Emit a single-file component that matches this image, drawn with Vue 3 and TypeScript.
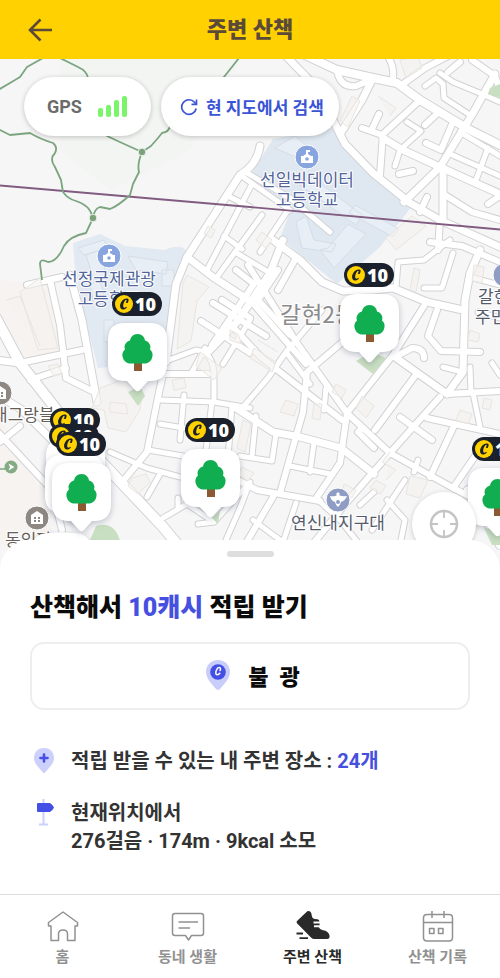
<script setup lang="ts">
interface Road { d: string; w: number }
interface Pin { x: number; y: number; badge: boolean }

const roads: Road[] = [
  // north-east quarter
  { w: 7, d: 'M285 55L317 88L337 128L345 144L373 173L410 203L440 220L500 247' },
  { w: 8, d: 'M305 55L337 70L373 78L397 83L420 100L453 120L470 130L500 145' },
  { w: 7, d: 'M373 78L362 100L340 134' },
  { w: 6, d: 'M387 55Q396 68 392 82' },
  { w: 6, d: 'M450 55L425 68L403 84' },
  { w: 6, d: 'M337 70Q340 88 356 86L373 79' },
  { w: 6, d: 'M418 102L383 134L380 175' },
  { w: 7, d: 'M383 138L403 150L440 167L500 194' },
  { w: 6, d: 'M362 128L382 135M379 114L372 129' },
  { w: 7, d: 'M495 74L473 113L440 167L404 202' },
  { w: 7, d: 'M443 168L443 219' },
  { w: 5, d: 'M395 166L400 150L421 131L407 122' },
  { w: 6, d: 'M399 174L413 171M425 125L440 111' },
  { w: 6, d: 'M426 143L441 150L453 122' },
  { w: 5, d: 'M460 132L500 156M450 154L500 176M488 148L476 180' },
  { w: 5, d: 'M425 86L436 78L443 84L444 98L470 115' },
  { w: 5, d: 'M440 73L453 82L482 94L500 102' },
  { w: 6, d: 'M472 60L495 76L500 90M448 72L460 62' },
  { w: 6, d: 'M427 197L420 212M445 195L472 212L500 220M488 204L500 196' },
  { w: 6, d: 'M440 220L438 250M430 242L462 246L500 262' },
  // north-west quarter
  { w: 7, d: 'M260 146Q257 165 240 175L187 257L176 284L166 362' },
  { w: 7, d: 'M187 257L213 277L250 301' },
  { w: 5, d: 'M252 184L207 270M228 196L250 207M243 177L290 210' },
  { w: 5, d: 'M217 277L262 215M235 252L270 273M224 236L242 249' },
  { w: 5, d: 'M247 173L290 198L330 232M288 210L260 252' },
  { w: 6, d: 'M236 270L254 284L212 345M222 300L250 318M201 321L250 353M213 303L266 336' },
  { w: 5, d: 'M250 320L223 364M205 348L192 372' },
  // west quarter
  { w: 6, d: 'M27 285L62 277M50 280L60 325L63 350L66 378L96 393' },
  { w: 7, d: 'M70 275L82 320L97 402' },
  { w: 10, d: 'M-4 318L20 363L67 423L97 457L163 527L178 545' },
  { w: 6, d: 'M20 363L82 350M30 380L66 368' },
  { w: 7, d: 'M-4 360L20 363M-2 395L22 410L52 440L60 456' },
  { w: 6, d: 'M-4 430L52 490L62 530M0 442L20 426' },
  { w: 5, d: 'M166 361L196 350Q214 352 214 377L214 402L250 408' },
  { w: 6, d: 'M163 374L208 374M163 374L157 402L147 452L123 481' },
  { w: 5, d: 'M160 400L214 402M110 452L147 468L180 477M148 450L183 456M160 474L147 497' },
  { w: 5, d: 'M160 424L184 428M184 395L180 440M212 402L206 450M232 406L227 470' },
  { w: 5, d: 'M163 518L187 504L214 522L198 524M178 498L178 508M214 522L250 482M250 482L240 508L226 540' },
  // centre
  { w: 7, d: 'M273 240L300 260L322 282L343 291L373 290L393 288L427 302L463 310' },
  { w: 7, d: 'M283 240L270 273L237 322L206 354' },
  { w: 6, d: 'M248 265L297 343L347 413L390 453L453 488L500 512' },
  { w: 6, d: 'M230 324L262 358L307 393L342 420' },
  { w: 6, d: 'M278 270L258 300L290 335M296 258L278 290M250 300L306 364' },
  { w: 6, d: 'M345 340L307 372L303 412L280 493' },
  { w: 5, d: 'M322 310L286 352L268 378L244 406M286 352L310 384M326 388L324 410' },
  { w: 6, d: 'M424 306L393 355L347 413L340 463L317 497' },
  { w: 7, d: 'M395 357L447 394L463 372L465 300L470 273L480 250' },
  { w: 6, d: 'M415 376L375 430M447 394L500 391M440 397L390 453L347 502L312 545' },
  { w: 6, d: 'M437 310L428 336L441 351L480 352M397 356L412 348Q424 348 424 358' },
  { w: 5, d: 'M470 367L471 392M443 367L462 372M492 363L500 375M473 393L480 427' },
  { w: 5, d: 'M396 288L398 262L424 260L450 240M453 253L442 288L424 288M470 277L500 285M478 312L500 318' },
  { w: 7, d: 'M236 408L273 432L300 437L341 448L374 474' },
  { w: 5, d: 'M240 456L272 461L276 434M256 416L252 456M314 442L310 472M290 466L330 474' },
  { w: 6, d: 'M230 476L257 490L320 501M273 497L245 545M374 448L358 432L362 428' },
  { w: 5, d: 'M360 505L374 492M296 503L282 545M318 500L340 520L360 545M418 460L414 472' },
  { w: 6, d: 'M427 418L500 434M453 428L430 477M400 417L432 440M478 452L453 488' },
  { w: 5, d: 'M387 500L405 520L400 545M405 480L372 530M253 520L280 540' },
  { w: 8, d: 'M474 498L500 545M468 490L500 480' }
]

const buildings = [
  'M352 96l8 5-12 26-8-6zM400 60l18-4 4 12-16 10zM378 96l18 12-6 8',
  'M208 226l7 4-4 8-7-4zM20 292l20-14 18 70-20 2zM6 300l14-4 20 50',
  'M187 275l22 12-12 14-6 40-14 8 6-66zM200 352l22 16-8 12-18-14z',
  'M230 330l8 4 4 10-12-4zM172 380l12-2 2 10-12 2z',
  'M100 388l22-8 20 12-2 18-14 22-18-4-4-18-12-2zM110 402l16 2 2 10-18-2z',
  'M132 478l14-4 4 8-12 12-10-8zM48 366l10-2 4 10-8 2z',
  'M254 348l22 14-4 10-22-14zM258 340l20 12M286 400l12 4-4 12-14-4zM314 404l8 0-2 16-8-2z',
  'M362 396l12 10-8 12-10-10zM336 384l10 6-4 8-10-6zM414 268l6 2-4 22-6-2z',
  'M386 480l10-10-14-8 8-10M470 330l10 4-2 8-10-2zM474 265l10 2-2 16-10-2z',
  'M243 420l8 4-6 28-8-4zM410 476l18 4-8 18-14-4zM376 480l10 6-6 8-10-6z',
  'M386 238l26-22 14 10-30 24zM262 232l10 8-6 8-10-8zM484 398l8 2-2 10-8-2z',
  'M242 467l12 6-6 8-10-6zM344 484l12 6-4 8-10-6zM460 410l12 4-4 10-12-4z'
]

const greens = [
  'M490 88L500 84V98L488 94z',
  'M356 361L372 352L386 358L373 374z',
  'M128 392L140 386L145 396L138 406z',
  'M88 545L96 526Q116 520 121 545z',
  'M212 518L220 510L218 524z',
  'M484 528L500 530V545H492z'
]

const trails = [
  'M-2 90L10 83L20 77L27 67L43 58',
  'M60 58L78 67Q87 71 88 78L107 136L122 143L142 152',
  'M239 58L224 77L170 126Q169 132 162 133L158 138L151 146L142 152',
  'M-2 129L10 135L30 133Q40 139 53 143Q58 147 55 153Q49 159 55 167L61 180L63 192Q68 199 76 201Q90 205 93 218',
  'M142 152Q137 164 139 172L133 184L130 195Q118 206 110 209L100 207Q94 209 93 218L86 233Q70 236 64 246Q57 262 48 262Q40 258 40 264L42 280'
]

// Coordinates are the upper-left corner of each pin, measured inside the map.
const pins: Pin[] = [
  { x: 340, y: 204, badge: true },
  { x: 108, y: 233, badge: true },
  { x: 181, y: 359, badge: true },
  { x: 468, y: 378, badge: true },
  { x: 32, y: 443, badge: false },
  { x: 46, y: 349, badge: true },
  { x: 45, y: 365, badge: true },
  { x: 52, y: 373, badge: true }
]
const mapWidth = 500

const placeCount = 24
const steps = 276
const metres = 174
const kcal = 9
</script>

<template>
  <div class="screen">
    <header class="topbar">
      <button class="back" type="button" aria-label="뒤로">
        <svg width="26" height="24" viewBox="0 0 26 24"><path d="M24 12H2M12.500 1.500L2 12l10.500 10.500" fill="none" stroke="currentColor" stroke-width="2.600" /></svg>
      </button>
      <h1>주변 산책</h1>
    </header>

    <section class="map" aria-label="지도">
      <svg class="tiles" viewBox="0 59 500 511" preserveAspectRatio="xMidYMin slice">
        <rect y="59" width="500" height="511" fill="#f6f6f7" />
        <path d="M60 59H240L190 150L110 190L60 150z" fill="#f3f5f3" />
        <path d="M0 280L50 285L60 350L20 362L0 330zM0 420L50 490L52 545H0z" fill="#f6f3f1" />
        <path d="M250 176L273 139L333 128L412 206L380 247L337 284L280 238L290 212z" fill="#dfe8f1" />
        <path d="M73 243L100 234L125 246L165 250Q180 243 187 251L182 270L172 300L165 362L98 368L88 330L75 270z" fill="#e1e9f2" />
        <g fill="#e7eef5" stroke="#d5dde8">
          <path d="M86 255l14-5 6 26-12 4zM78 248l26-8 4 8-24 7zM128 256l40 6-2 12-30-4zM104 320h10v22h-10zM162 270h12v16h-12zM90 284l10-3 6 22-12 2z" />
          <path d="M275 148l20-12 12 10-14 10zM300 185l12-8 50 38-6 10zM355 205l44 24-6 8-44-24zM296 222l10-6 8 24 22 4-4 8-30-4zM320 250l8-2 20-24 18 10-32 34-6-8z" />
        </g>
        <g fill="none" stroke-linejoin="round" stroke-linecap="round">
          <path v-for="(r, i) in roads" :key="'c' + i" :d="r.d" stroke="#d2d2d5" :stroke-width="r.w + 2" />
          <path v-for="(r, i) in roads" :key="'f' + i" :d="r.d" stroke="#ffffff" :stroke-width="r.w" />
        </g>
        <path v-for="(b, i) in buildings" :key="'b' + i" :d="b" fill="#f5f2ee" fill-opacity=".6" stroke="#e9e5df" />
        <path v-for="(g, i) in greens" :key="'g' + i" :d="g" fill="#c9dfc2" />
        <path d="M0 185.500L250 207L500 229.500" fill="none" stroke="#815b80" stroke-width="1.800" />
        <g fill="none" stroke="#7ba57f" stroke-width="1.800" stroke-linejoin="round">
          <path v-for="(t, i) in trails" :key="'t' + i" :d="t" />
        </g>
        <g fill="#7ba07a" stroke="#e8f0e8" stroke-width="1">
          <circle cx="142" cy="152" r="3.800" /><circle cx="93" cy="218" r="3.800" />
        </g>
        <path d="M-2 469h8" stroke="#7ba57f" stroke-width="1.500" />
        <circle cx="11" cy="467" r="6.500" fill="#85ab85" /><path d="M8.500 463.500l6 3.500-6 3.500 1.500-3.500z" fill="#fff" />

        <g stroke="#fff" stroke-width="1">
          <circle cx="307" cy="157" r="12" fill="#88a5e0" />
          <circle cx="109" cy="256" r="12" fill="#88a5e0" />
          <circle cx="338" cy="500" r="12" fill="#8f9cc4" />
          <circle cx="505" cy="275" r="12" fill="#8f9cc4" />
          <circle cx="0" cy="393" r="12" fill="#8e8883" />
          <circle cx="37" cy="518" r="12" fill="#8e8883" />
        </g>
        <g v-for="s in [{ x: 307, y: 157 }, { x: 109, y: 256 }]" :key="s.x" :transform="`translate(${s.x} ${s.y})`">
          <path d="M-6 6V-1h2l3-2v-4h4v2H1v2l3 2h2v7z" fill="#fff" /><circle cy="2" r="1.800" fill="#88a5e0" />
        </g>
        <path d="M330 496q5 1 7-1l-1-1 2-2 2 2-1 1q3 2 8 1-2 5-6 6-1 4-3 5-2-1-3-5-4-1-5-6z" fill="#fff" /><circle cx="338" cy="502" r="2" fill="#8f9cc4" />
        <g v-for="h in [{ x: 37, y: 518 }, { x: 0, y: 393 }]" :key="h.y" :transform="`translate(${h.x} ${h.y})`">
          <path d="M-6 6v-9l6-4 6 4v9z" fill="#fff" /><path d="M-3-1h2v2h-2zM1-1h2v2H1zM-3 2h2v2h-2zM1 2h2v2H1z" fill="#8e8883" />
        </g>
        <g class="labels" text-anchor="middle">
          <g class="blue">
            <text x="307" y="186">선일빅데이터</text><text x="307" y="206">고등학교</text>
            <text x="109" y="285">선정국제관광</text><text x="109" y="305">고등학교</text>
          </g>
          <text class="slate" x="338" y="529">연신내지구대</text>
          <g class="slate" text-anchor="start"><text x="478" y="303">갈현2동</text><text x="475" y="323">주민센터</text></g>
          <text class="district" text-anchor="start" x="280" y="323">갈현2동</text>
          <g class="brown" text-anchor="start"><text x="-8" y="421">래그랑블</text><text x="5" y="546">동익파크</text></g>
        </g>
      </svg>

      <div
        v-for="(pin, i) in pins"
        :key="i"
        class="pin"
        :style="{ left: (pin.x / mapWidth) * 100 + '%', top: pin.y + 'px' }"
      >
        <span class="badge" :class="{ hidden: !pin.badge }">
          <svg width="18" height="18" viewBox="0 0 20 20"><circle cx="10" cy="10" r="10" fill="#ffd200" /><path d="M14.800 4.500C11.500 2.400 6 6.500 5.600 12c-.2 4.800 4.600 5.400 7.600 1.800l-.7-.7c-1.900 1.800-3.600 1.300-3.400-1.300.2-3 2-6.600 3.400-6.600.8 0 .3 1.700-.6 3.300l2.200.3c.9-1.500 1.400-3.200.7-4.300z" fill="#1b212c" /></svg>
          <b>10</b>
        </span>
        <svg class="bubble" width="59" height="69" viewBox="0 0 59 69">
          <path d="M17 0H42Q59 0 59 17V41Q59 58 42 58H40L32 67Q29.500 69.500 27 67L19 58H17Q0 58 0 41V17Q0 0 17 0z" fill="#fff" />
          <path d="M26 38h8v10h-8z" fill="#8b5a32" />
          <path d="M29.500 11c-4.500 0-7 3-7.500 6.500-4 1-6.500 5-5 9-3 2.500-3 6-2 8.500 1 3.500 4 5.500 8 5.500h13c4 0 7-2 8-5.500 1-3 1-6-2-8.500 1.500-4-1-8-5-9C36.500 14 34 11 29.500 11z" fill="#10ae50" />
        </svg>
      </div>

      <div class="controls">
        <div class="pill gps">
          <span>GPS</span>
          <svg width="30" height="21" viewBox="0 0 30 21" fill="#7af56b"><rect y="12" width="5" height="9" rx="2" /><rect x="8" y="9" width="5" height="12" rx="2" /><rect x="16" y="4" width="5" height="17" rx="2" /><rect x="24" width="5" height="21" rx="2" /></svg>
        </div>
        <button class="pill search" type="button">
          <svg width="18" height="18" viewBox="0 0 18 18" fill="none" stroke="currentColor" stroke-width="1.700"><path d="M16.200 10.500A7.300 7.300 0 1 1 14.500 4.200L16 6" /><path d="M16.500 1.500V6.300H11.500" /></svg>
          현 지도에서 검색
        </button>
      </div>

      <button class="locate" type="button" aria-label="현재 위치">
        <svg width="30" height="30" viewBox="0 0 30 30" fill="none" stroke="#c4c4c4"><circle cx="15" cy="15" r="13" stroke-width="2.500" /><path d="M15 2v7M15 21v7M2 15h7M21 15h7" stroke-width="1.800" /></svg>
      </button>
    </section>

    <main class="sheet">
      <div class="handle"></div>
      <h2>산책해서 <em>10캐시</em> 적립 받기</h2>
      <button class="place" type="button">
        <svg width="24" height="30" viewBox="0 0 24 30"><path d="M12 0C5 0 0 5 0 12c0 7 7 13 10 17q2 2 4 0c3-4 10-10 10-17C24 5 19 0 12 0z" fill="#c9cdf9" /><circle cx="12" cy="12" r="7.800" fill="#444fe6" /><path d="M14 10.500c1-1.700.4-3-.8-3-1.900 0-3.400 3-3.400 5.300 0 2.700 2.700 2.300 4 .5" fill="none" stroke="#fff" stroke-width="1.500" stroke-linecap="round" /></svg>
        <span>불&nbsp; 광</span>
      </button>
      <ul>
        <li>
          <svg width="20" height="28" viewBox="0 0 20 28"><path d="M10 1C4 1 0 5 0 11c0 6 5.500 10 8.500 14q1.500 2 3 0C14.500 21 20 17 20 11 20 5 16 1 10 1z" fill="#ccd0fa" /><path d="M10 7.500v7M6.500 11h7" stroke="#444fe6" stroke-width="2.600" stroke-linecap="round" /></svg>
          <p>적립 받을 수 있는 내 주변 장소 : <em>{{ placeCount }}개</em></p>
        </li>
        <li>
          <svg width="20" height="28" viewBox="0 0 20 28"><path d="M9.500 0v25M5 25.500h9" stroke="#ccd0fa" stroke-width="2" /><path d="M4 4h12q3 2 4 4.500-1 2.500-4 4.500H4q-1 0-1-1V5q0-1 1-1z" fill="#444fe6" /></svg>
          <p>현재위치에서<br>{{ steps }}걸음 · {{ metres }}m · {{ kcal }}kcal 소모</p>
        </li>
      </ul>
    </main>

    <nav class="tabs">
      <a href="#home">
        <svg width="34" height="32" viewBox="0 0 34 32"><path d="M17 2L31.500 12.500V16H29V30.500H21.500V24Q21.500 20 17 20T12.500 24V30.500H5V16H2.500V12.500z" /></svg>
        홈
      </a>
      <a href="#town">
        <svg width="34" height="32" viewBox="0 0 34 32"><path d="M4 3.500H30Q32.500 3.500 32.500 6V23Q32.500 25.500 30 25.500H20.500L17.500 30L14.500 25.500H4Q1.500 25.500 1.500 23V6Q1.500 3.500 4 3.500z" /><path d="M7.500 12H27M7.500 18H19" /></svg>
        동네 생활
      </a>
      <a href="#walk" class="active" aria-current="page">
        <svg width="34" height="32" viewBox="0 0 34 32"><path d="M1 11L11.300 1.300Q13 .3 14.600 2Q15.700 3.400 15.700 5.500Q16 8.500 18.500 9L21.500 9.300Q23.300 9.700 23.500 11.500H17.500V13.400H23.600V15.300H18V17.200H22.800Q24 20 27 20.300Q32.500 21 33.500 25.500Q34 29 31 29H18.500Q16.500 29 15 27.500L1 13.300Q0 12 1 11z" fill="currentColor" stroke="none" /><path d="M.5 23.500H7M3.500 28.200H12" stroke-width="1.800" /></svg>
        주변 산책
      </a>
      <a href="#history">
        <svg width="34" height="32" viewBox="0 0 34 32"><path d="M6 4.500H28Q31.500 4.500 31.500 8V27.500Q31.500 31 28 31H6Q2.500 31 2.500 27.500V8Q2.500 4.500 6 4.500zM2.500 12.500H31.500M11 1V8M23 1V8M8.500 18.500h4.500v5H8.500zM17.500 18.500h4.500v5h-4.500z" /></svg>
        산책 기록
      </a>
    </nav>
  </div>
</template>

<style>
body { margin: 0; background: #fff; }
</style>

<style scoped>
* { box-sizing: border-box; }
.screen {
  display: flex;
  flex-direction: column;
  min-height: 100vh;
  overflow: hidden;
  color: #333;
  font-family: Roboto, "Noto Sans CJK KR", sans-serif;
}
button { font: inherit; border: 0; cursor: pointer; }
em { color: #4650e0; font-style: normal; }
svg { flex: none; display: block; }

.topbar {
  display: grid;
  grid-template-columns: 56px 1fr 56px;
  align-items: center;
  height: 59px;
  background: #ffd100;
  color: #5c4a38;
}
.back { display: flex; justify-content: flex-end; padding: 0 2px; background: none; color: inherit; }
h1 { margin: 0; font-size: 22px; line-height: 32px; font-weight: 900; text-align: center; }

.map { position: relative; flex: 1; min-height: 420px; overflow: hidden; }
.tiles { position: absolute; inset: 0; width: 100%; height: 100%; }
.labels text {
  font-family: "Noto Sans CJK KR", sans-serif;
  font-size: 17px;
  font-weight: 400;
  stroke: #fff;
  stroke-width: 2px;
  stroke-linejoin: round;
  paint-order: stroke;
}
.blue { fill: #51659a; }
.slate { fill: #555a6c; }
.brown { fill: #655e58; }
.labels .district { font-size: 23px; fill: #8b8b8b; }

.pin { position: absolute; display: flex; flex-direction: column; gap: 7px; }
.badge {
  display: flex;
  align-items: center;
  gap: 2px;
  width: 50px;
  height: 24px;
  margin-left: 4px;
  padding-left: 3px;
  border-radius: 12px;
  background: #1b212c;
  color: #fff;
  font: 700 18px/24px "Noto Sans", sans-serif;
}
.badge.hidden { visibility: hidden; }
.bubble { filter: drop-shadow(0 2px 3px rgb(40 50 80 / 28%)); overflow: visible; }

.controls { position: relative; display: flex; gap: 10px; padding: 18px 24px; }
.pill {
  display: flex;
  align-items: center;
  height: 59px;
  border-radius: 30px;
  background: #fff;
  box-shadow: 0 1px 5px rgb(0 0 0 / 22%);
  font-weight: 700;
  font-size: 17px;
  white-space: nowrap;
}
.gps { gap: 16px; padding: 0 23px; color: #6c6c6c; font-size: 18px; }
.search { gap: 8px; padding: 0 15px 0 19px; color: #3a54d6; }

.locate {
  position: absolute;
  right: 24px;
  bottom: 14px;
  display: grid;
  place-items: center;
  width: 64px;
  height: 64px;
  padding: 0;
  border-radius: 50%;
  background: #fff;
  box-shadow: 0 1px 5px rgb(0 0 0 / 18%);
}

.sheet {
  position: relative;
  display: flex;
  flex-direction: column;
  margin-top: -30px;
  padding: 11px 30px 39px;
  border-radius: 30px 30px 0 0;
  background: #fff;
}
.handle { align-self: center; width: 47px; height: 6px; border-radius: 3px; background: #dedede; }
h2 { margin: 32px 0 16px; color: #0b0b0b; font-size: 25px; line-height: 37px; font-weight: 900; }
.place {
  display: flex;
  align-items: center;
  justify-content: center;
  gap: 18px;
  height: 68px;
  padding: 0 0 2px 6px;
  border: 2px solid #eee;
  border-radius: 14px;
  background: #fff;
  color: #0b0b0b;
  font-size: 22px;
  font-weight: 900;
}
ul { display: flex; flex-direction: column; gap: 24px; margin: 37px 0 0; padding: 0 4px; list-style: none; }
li { display: flex; gap: 17px; }
p { margin: 0; font-size: 20px; line-height: 28px; font-weight: 700; }

.tabs {
  display: grid;
  grid-template-columns: repeat(4, 1fr);
  height: 84px;
  border-top: 1px solid #dedede;
  background: #fff;
}
.tabs a {
  display: flex;
  flex-direction: column;
  align-items: center;
  gap: 3px;
  padding-top: 15px;
  color: #919191;
  font-size: 15px;
  line-height: 24px;
  font-weight: 700;
  text-decoration: none;
}
.tabs svg { fill: none; stroke: currentColor; stroke-width: 1.5; stroke-linejoin: round; }
.tabs .active { color: #292929; }
</style>
